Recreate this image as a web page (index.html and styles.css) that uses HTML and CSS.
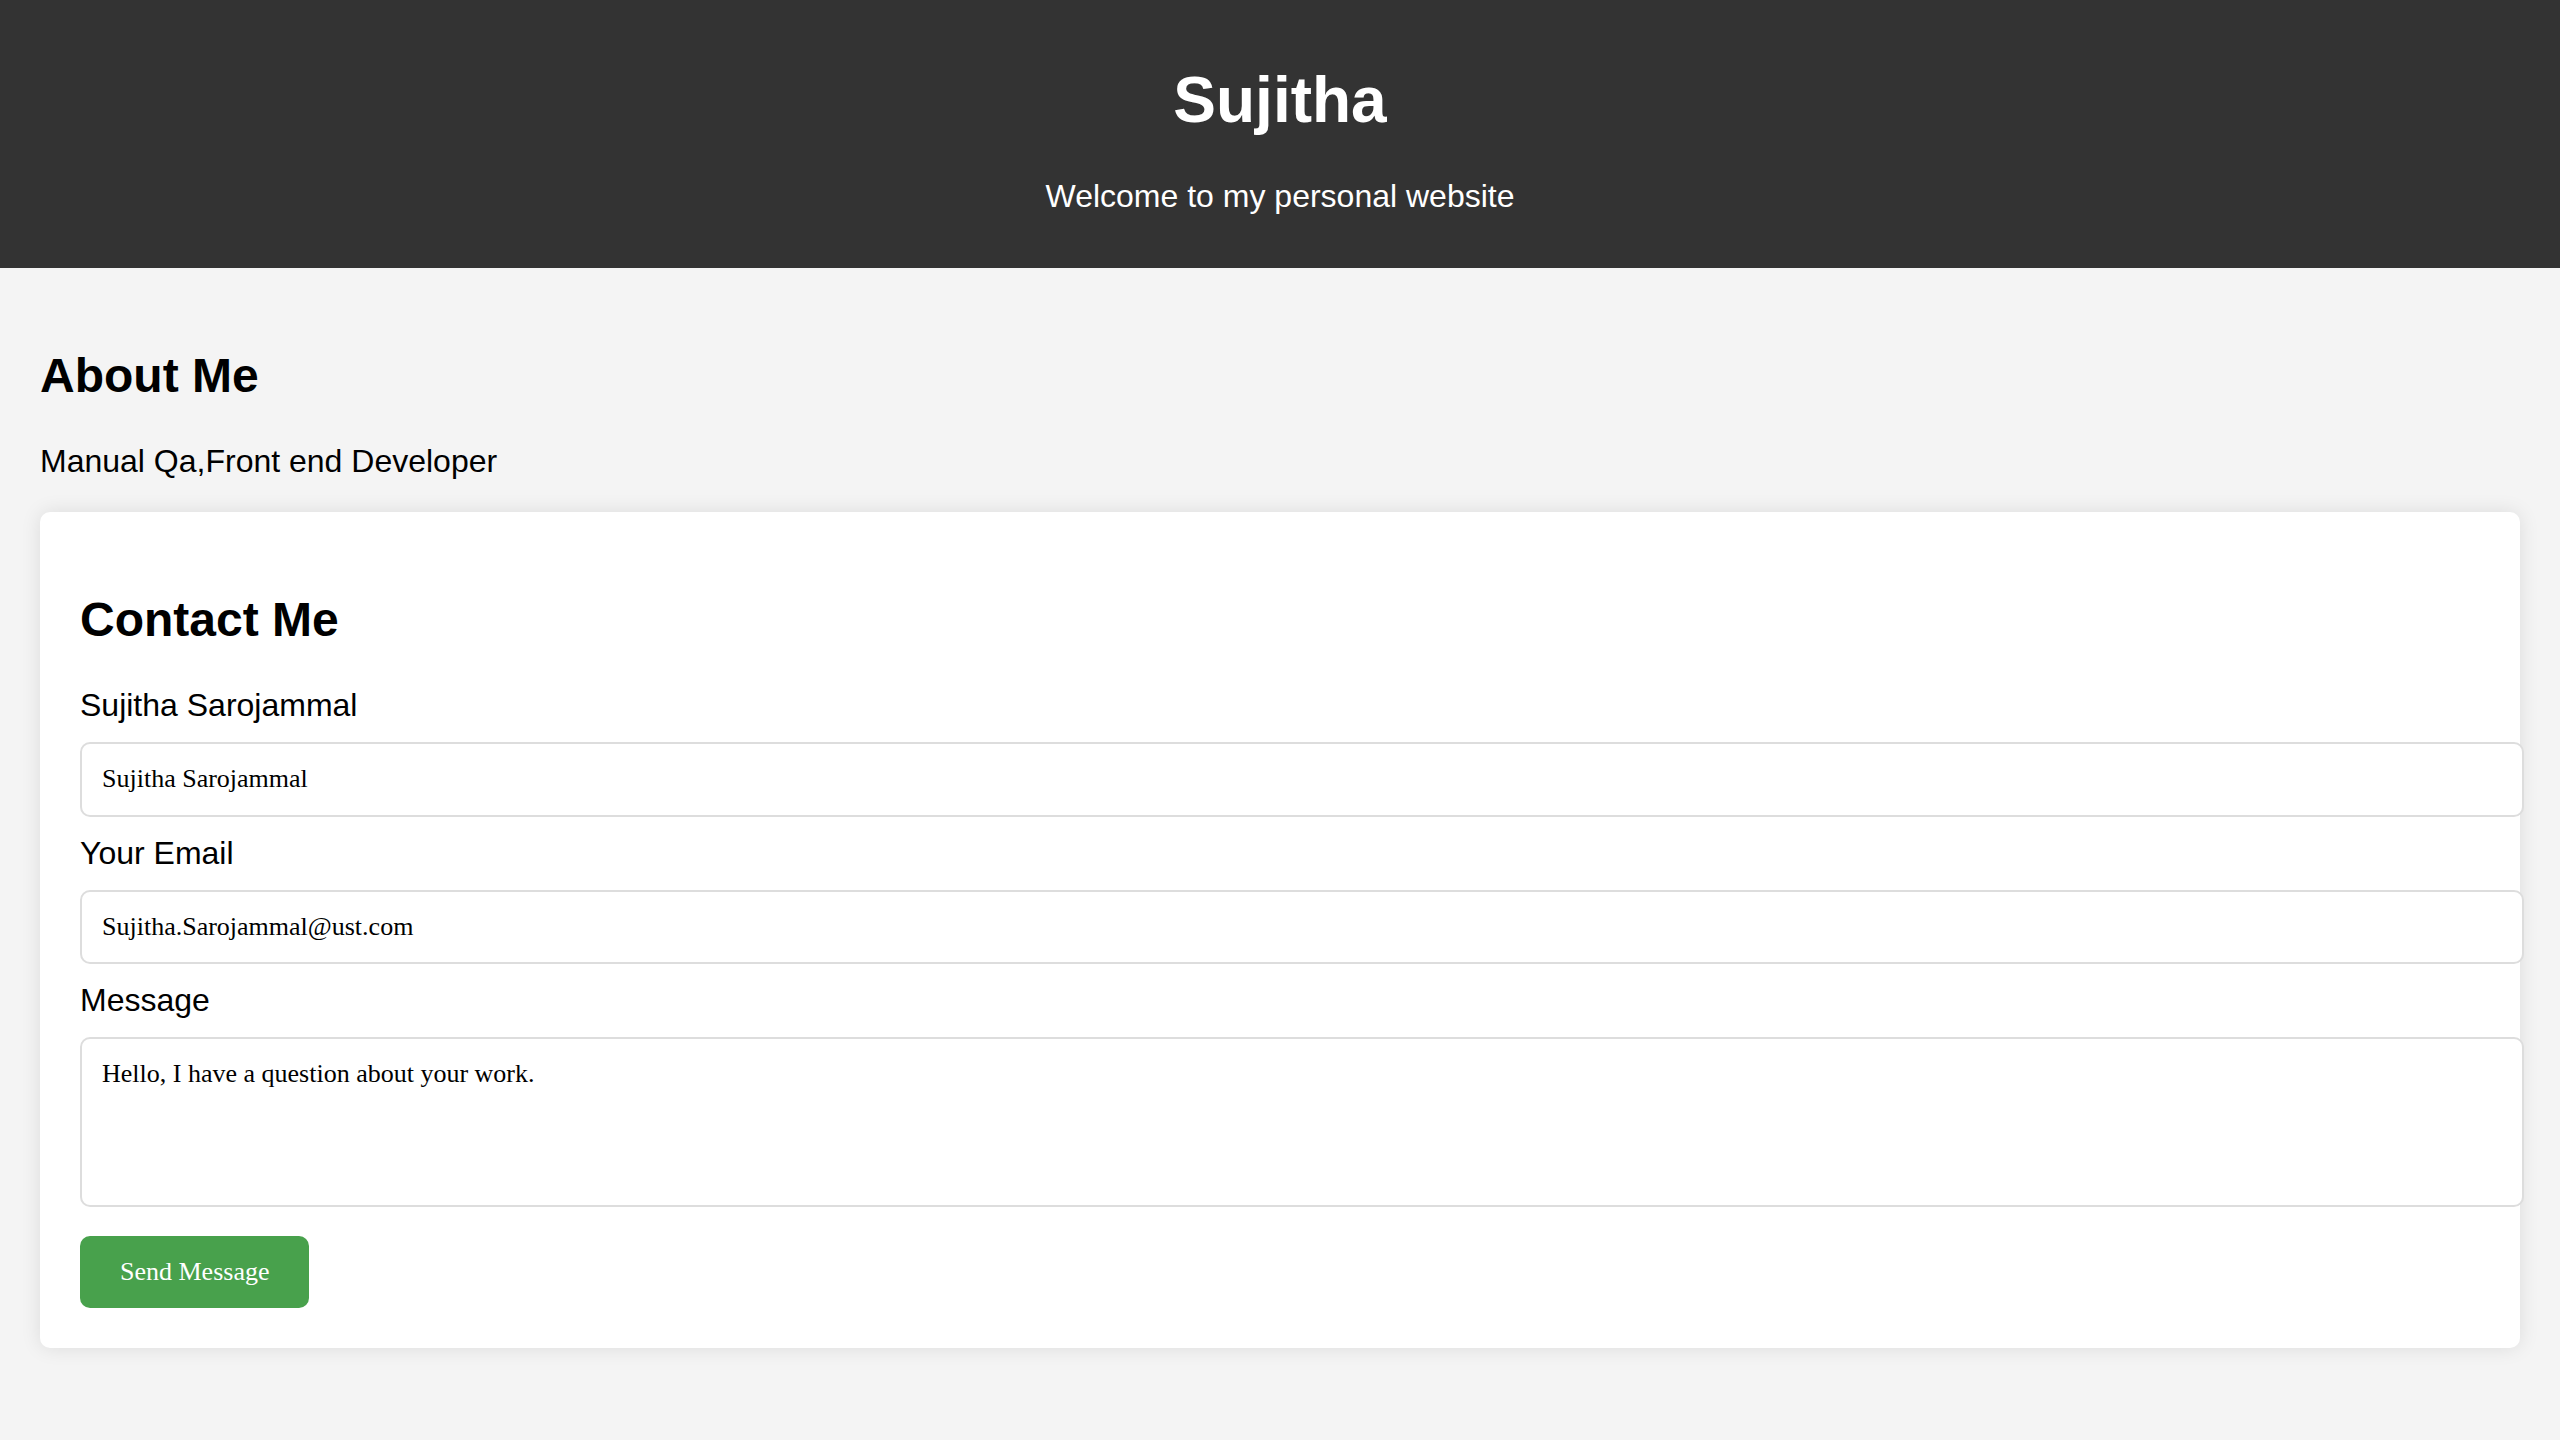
FILE: index.html
```html
<!DOCTYPE html>
<html lang="en">
<head>
<meta charset="utf-8">
<title>Sujitha</title>
<link rel="stylesheet" href="styles.css">
</head>
<body>
<header class="site-header">
  <h1 class="site-title">Sujitha</h1>
  <p class="site-tagline">Welcome to my personal website</p>
</header>
<main class="main">
  <h2 class="section-title">About Me</h2>
  <p class="about-text">Manual Qa,Front end Developer</p>
  <section class="card">
    <h2 class="section-title">Contact Me</h2>
    <form class="contact-form">
      <label class="field-label" for="name">Sujitha Sarojammal</label>
      <input class="field-input" id="name" type="text" value="Sujitha Sarojammal">
      <label class="field-label" for="email">Your Email</label>
      <input class="field-input" id="email" type="email" value="Sujitha.Sarojammal@ust.com">
      <label class="field-label" for="message">Message</label>
      <textarea class="field-input field-textarea" id="message">Hello, I have a question about your work.</textarea>
      <button class="send-btn" type="button">Send Message</button>
    </form>
  </section>
</main>
</body>
</html>
```

FILE: styles.css
```css
html, body {
  margin: 0;
  padding: 0;
}

body {
  background: #f4f4f4;
  font-family: "Liberation Sans", Arial, sans-serif;
  font-size: 32px;
  color: #000;
}

.site-header {
  background: #333;
  color: #fff;
  text-align: center;
  padding: 20px 0;
}

.site-title {
  font-size: 64px;
  font-weight: bold;
  margin: 43px 0 41px;
  line-height: normal;
}

.site-tagline {
  margin: 0 0 33px;
  font-size: 32px;
}

.main {
  padding: 40px;
}

.section-title {
  font-size: 48px;
  font-weight: bold;
  margin: 40px 0;
}

.about-text {
  margin: 39px 0 32px;
}

.card {
  background: #fff;
  border-radius: 10px;
  padding: 40px;
  box-shadow: 0 0 20px rgba(0, 0, 0, 0.1);
}

.contact-form {
  display: flex;
  flex-direction: column;
  align-items: flex-start;
}

.field-label {
  display: block;
  font-size: 32px;
  line-height: normal;
}

.field-input {
  display: block;
  box-sizing: content-box;
  width: 100%;
  margin: 18px 0;
  padding: 20px;
  border: 2px solid #ddd;
  border-radius: 10px;
  font-family: "Liberation Serif", "Times New Roman", serif;
  font-size: 26px;
  line-height: 30.7px;
  height: 30.7px;
  color: #000;
  background: #fff;
  outline: none;
}

.field-textarea {
  box-sizing: border-box;
  width: calc(100% + 44px);
  height: 170px;
  margin-bottom: 29px;
  resize: none;
}

.send-btn {
  background: #48a14c;
  color: #fff;
  border: none;
  border-radius: 10px;
  padding: 20px 40px;
  font-family: "Liberation Serif", "Times New Roman", serif;
  font-size: 26px;
  line-height: normal;
  height: 72px;
  cursor: pointer;
}
```
